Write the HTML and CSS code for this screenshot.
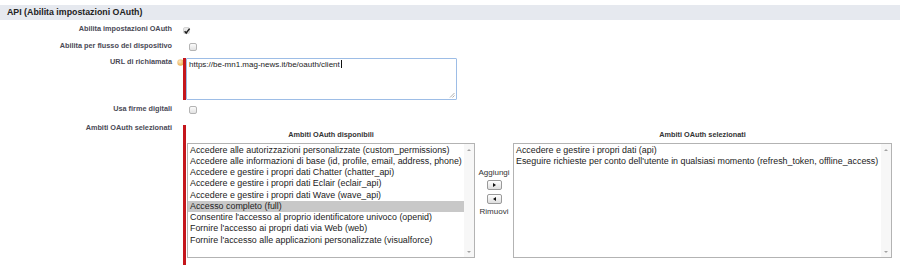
FILE: index.html
```html
<!DOCTYPE html>
<html lang="it">
<head>
  <meta charset="UTF-8" />
  <title>API (Abilita impostazioni OAuth)</title>
  <link rel="stylesheet" href="styles.css">
</head>
<body>
  <div class="section-head">API (Abilita impostazioni OAuth)</div>

  <div class="form">
    <div class="row row-oauth">
      <div class="label">Abilita impostazioni OAuth</div>
      <div class="data">
        <span class="check is-checked">
          <svg width="8" height="8" viewBox="0 0 8 8"><path d="M1.6 4.2 L3.2 6 L6.6 1.6" fill="none" stroke="#1e1e1e" stroke-width="1.5"/></svg>
        </span>
      </div>
    </div>

    <div class="row row-device">
      <div class="label">Abilita per flusso del dispositivo</div>
      <div class="data"><span class="check"></span></div>
    </div>

    <div class="row row-url">
      <div class="label">URL di richiamata</div>
      <div class="help">
        <svg width="7" height="7" viewBox="0 0 7 7">
          <defs>
            <radialGradient id="hg" cx="0.4" cy="0.35" r="0.7">
              <stop offset="0" stop-color="#fbe6bd"/>
              <stop offset="1" stop-color="#e9aa4c"/>
            </radialGradient>
          </defs>
          <circle cx="3.5" cy="3.5" r="3.2" fill="url(#hg)"/>
        </svg>
      </div>
      <div class="required">
        <div class="textarea">https://be-mn1.mag-news.it/be/oauth/client<span class="caret"></span>
          <svg class="grip" width="6" height="6" viewBox="0 0 6 6"><path d="M5.5 1 L1 5.5 M5.5 3.5 L3.5 5.5" stroke="#9a9a9a" stroke-width="0.8"/></svg>
        </div>
      </div>
    </div>

    <div class="row row-sign">
      <div class="label">Usa firme digitali</div>
      <div class="data"><span class="check"></span></div>
    </div>

    <div class="row row-scopes">
      <div class="label">Ambiti OAuth selezionati</div>
      <div class="required scopes">
        <div class="duel">
          <div class="duel-col">
            <div class="duel-title">Ambiti OAuth disponibili</div>
            <div class="listbox list-left">
              <div class="options">
                <div class="opt">Accedere alle autorizzazioni personalizzate (custom_permissions)</div>
                <div class="opt">Accedere alle informazioni di base (id, profile, email, address, phone)</div>
                <div class="opt">Accedere e gestire i propri dati Chatter (chatter_api)</div>
                <div class="opt">Accedere e gestire i propri dati Eclair (eclair_api)</div>
                <div class="opt">Accedere e gestire i propri dati Wave (wave_api)</div>
                <div class="opt selected">Accesso completo (full)</div>
                <div class="opt">Consentire l'accesso al proprio identificatore univoco (openid)</div>
                <div class="opt">Fornire l'accesso ai propri dati via Web (web)</div>
                <div class="opt">Fornire l'accesso alle applicazioni personalizzate (visualforce)</div>
              </div>
              <div class="scrollbar"><span class="arrow-up"></span><span class="arrow-down"></span></div>
            </div>
          </div>

          <div class="duel-buttons">
            <div class="btn-label">Aggiungi</div>
            <button class="arrow-btn"><span class="tri-right"></span></button>
            <button class="arrow-btn"><span class="tri-left"></span></button>
            <div class="btn-label btn-label-bottom">Rimuovi</div>
          </div>

          <div class="duel-col">
            <div class="duel-title">Ambiti OAuth selezionati</div>
            <div class="listbox list-right">
              <div class="options">
                <div class="opt">Accedere e gestire i propri dati (api)</div>
                <div class="opt">Eseguire richieste per conto dell'utente in qualsiasi momento (refresh_token, offline_access)</div>
              </div>
              <div class="scrollbar"><span class="arrow-up"></span><span class="arrow-down"></span></div>
            </div>
          </div>
        </div>
      </div>
    </div>
  </div>
</body>
</html>
```

FILE: styles.css
```css
* {
  box-sizing: border-box;
}

body {
  margin: 0;
  background: #ffffff;
  font-family: "Liberation Sans", Arial, sans-serif;
  color: #222222;
  overflow: hidden;
}

.section-head {
  margin-top: 5px;
  height: 15px;
  line-height: 15px;
  padding-left: 7px;
  background: #e6e9ef;
  font-size: 8.8px;
  font-weight: bold;
  color: #222222;
}

/* Form rows */
.row {
  display: flex;
  align-items: flex-start;
}

.label {
  width: 172px;
  flex: none;
  text-align: right;
  font-size: 7.3px;
  line-height: 10px;
  font-weight: bold;
  color: #4a4a56;
}

.data {
  padding-left: 11px;
}

.row-oauth { height: 18px; }
.row-oauth .label { padding-top: 4px; }
.row-oauth .check { margin-top: 7px; }

.row-device { height: 18px; }
.row-device .label { padding-top: 3px; }
.row-device .check { margin-top: 5px; margin-left: 6px; }

.row-url { height: 46px; }
.row-url .label { padding-top: 1px; }

.row-sign { height: 18px; }
.row-sign .label { padding-top: 2px; }
.row-sign .check { margin-top: 4px; margin-left: 6px; }

.row-scopes .label { padding-top: 3px; }

/* Checkboxes */
.check {
  display: block;
  width: 8px;
  height: 8px;
  border: 1px solid #b4b4b4;
  border-radius: 2px;
  background: linear-gradient(#fbfbfb, #e2e2e2);
}

.check.is-checked {
  width: 7px;
  height: 7px;
  border-color: #d4d4d4;
  background: #e9e9e9;
  position: relative;
}

.check.is-checked svg {
  position: absolute;
  left: -1px;
  top: -1px;
}

/* Help icon */
.help {
  width: 11px;
  flex: none;
  padding-left: 5px;
  padding-top: 3px;
  line-height: 0;
}

/* Required field marker */
.required {
  border-left: 3px solid #c4161c;
}

.row-url .required {
  margin-top: 2px;
  height: 42px;
}

.textarea {
  position: relative;
  width: 271px;
  height: 42px;
  border: 1px solid #9dbde6;
  border-radius: 1px;
  padding: 1px 2px;
  font-size: 8px;
  line-height: 10px;
  color: #222222;
}

.caret {
  display: inline-block;
  width: 1px;
  height: 8px;
  margin-left: 1px;
  vertical-align: -1px;
  background: #111111;
}

.grip {
  position: absolute;
  right: 1px;
  bottom: 1px;
}

/* Dueling list boxes */
.scopes {
  margin-left: 11px;
  margin-top: 5px;
  height: 150px;
  padding-left: 1px;
}

.duel {
  display: flex;
  align-items: flex-start;
  padding-top: 5px;
}

.duel-title {
  height: 13px;
  line-height: 10px;
  text-align: center;
  font-size: 7.3px;
  font-weight: bold;
  color: #333333;
}

.listbox {
  display: flex;
  height: 115px;
  border: 1px solid #b3b3b3;
  background: #ffffff;
}

.list-left { width: 288px; }
.list-right { width: 379px; }

.options {
  flex: 1;
  padding-top: 0.5px;
  font-size: 8.9px;
  line-height: 11.25px;
  color: #222222;
  white-space: nowrap;
  overflow: hidden;
}

.opt {
  padding-left: 2px;
}

.opt.selected {
  background: #c8c8c8;
}

.scrollbar {
  width: 10px;
  flex: none;
  display: flex;
  flex-direction: column;
  justify-content: space-between;
  align-items: center;
  padding: 5px 0 4px;
  background: #f7f7f7;
}

.arrow-up,
.arrow-down {
  width: 0;
  height: 0;
  border-left: 2px solid transparent;
  border-right: 2px solid transparent;
}

.arrow-up { border-bottom: 2px solid #a3a3a3; }
.arrow-down { border-top: 2px solid #a3a3a3; }

.duel-buttons {
  width: 38px;
  flex: none;
  display: flex;
  flex-direction: column;
  align-items: center;
  padding-top: 38px;
}

.btn-label {
  font-size: 8px;
  line-height: 10px;
  color: #333333;
}

.btn-label-bottom {
  margin-top: 3px;
}

.arrow-btn {
  display: flex;
  align-items: center;
  justify-content: center;
  width: 15px;
  height: 10px;
  margin-top: 2px;
  padding: 0;
  border: 1px solid #9a9a9a;
  border-radius: 2px;
  background: linear-gradient(#ffffff, #dedede);
}

.arrow-btn + .arrow-btn {
  margin-top: 4px;
}

.tri-right,
.tri-left {
  width: 0;
  height: 0;
  border-top: 2.5px solid transparent;
  border-bottom: 2.5px solid transparent;
}

.tri-right { border-left: 3px solid #111111; }
.tri-left { border-right: 3px solid #111111; }
```
